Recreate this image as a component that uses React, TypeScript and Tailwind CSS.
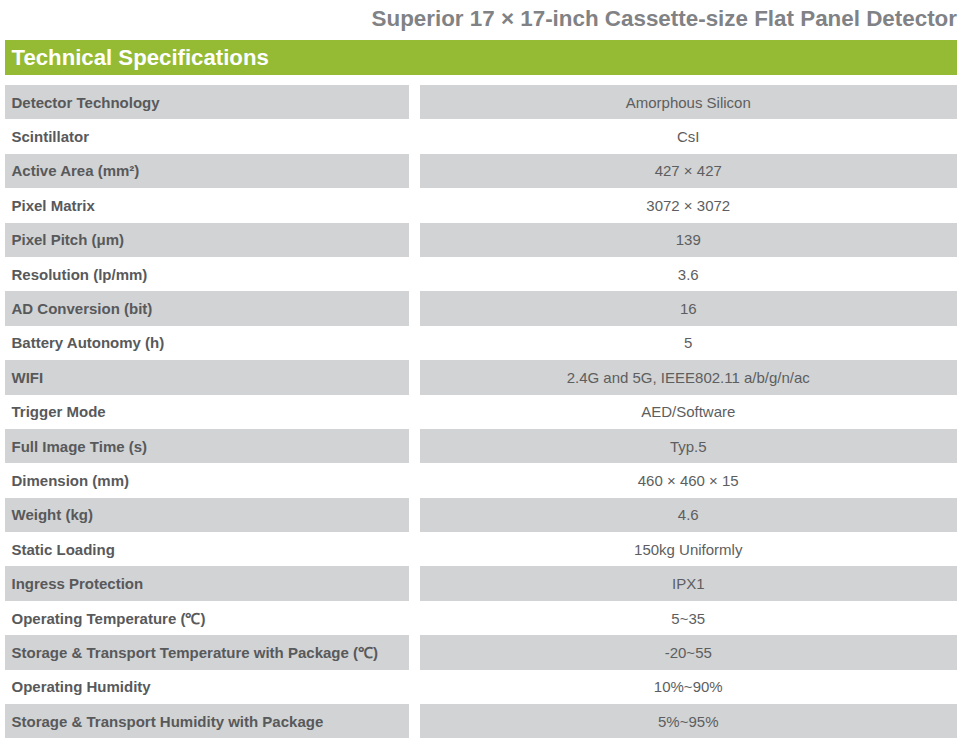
import React from "react";

const rows: [string, string][] = [
  ["Detector Technology", "Amorphous Silicon"],
  ["Scintillator", "CsI"],
  ["Active Area (mm²)", "427 × 427"],
  ["Pixel Matrix", "3072 × 3072"],
  ["Pixel Pitch (μm)", "139"],
  ["Resolution (lp/mm)", "3.6"],
  ["AD Conversion (bit)", "16"],
  ["Battery Autonomy (h)", "5"],
  ["WIFI", "2.4G and 5G, IEEE802.11 a/b/g/n/ac"],
  ["Trigger Mode", "AED/Software"],
  ["Full Image Time (s)", "Typ.5"],
  ["Dimension (mm)", "460 × 460 × 15"],
  ["Weight (kg)", "4.6"],
  ["Static Loading", "150kg Uniformly"],
  ["Ingress Protection", "IPX1"],
  ["Operating Temperature (℃)", "5~35"],
  ["Storage & Transport Temperature with Package (℃)", "-20~55"],
  ["Operating Humidity", "10%~90%"],
  ["Storage & Transport Humidity with Package", "5%~95%"],
];

export default function App() {
  return (
    <div
      className="w-[962px] h-[751px] bg-white px-[5px] overflow-hidden"
      style={{ fontFamily: '"Liberation Sans", Arial, sans-serif' }}
    >
      <div className="h-[40px] pt-[7.5px] text-right text-[22.4px] leading-[22px] font-bold text-[#808285]">
        Superior 17 × 17-inch Cassette-size Flat Panel Detector
      </div>
      <div className="h-[34.5px] bg-[#94bb33] flex items-center pl-[6.5px] pt-[1px] text-[22.2px] leading-[22px] font-bold text-white">
        Technical Specifications
      </div>
      <div className="mt-[10.5px] grid grid-cols-[403.5px_1fr] gap-x-[11px]">
        {rows.map(([label, value], i) => {
          const shaded = i % 2 === 0;
          return (
            <React.Fragment key={label}>
              <div
                className={`h-[34.4px] flex items-center pl-[6.5px] text-[15px] leading-none font-bold text-[#58595b] ${
                  shaded ? "bg-[#d1d3d4]" : "bg-white"
                }`}
              >
                {label}
              </div>
              <div
                className={`h-[34.4px] flex items-center justify-center text-[15px] leading-none text-[#5d5e60] ${
                  shaded ? "bg-[#d1d3d4]" : "bg-white"
                }`}
              >
                {value}
              </div>
            </React.Fragment>
          );
        })}
      </div>
    </div>
  );
}
